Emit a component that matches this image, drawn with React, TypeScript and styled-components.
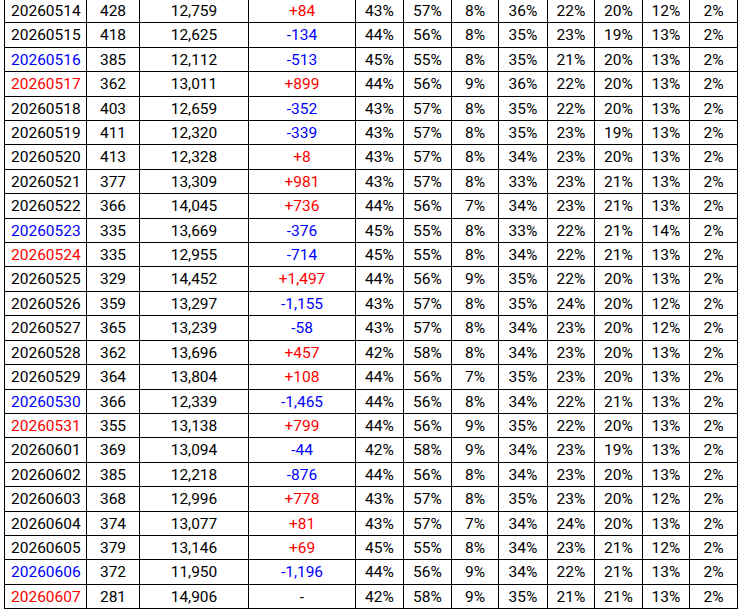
import React from "react";
import styled, { createGlobalStyle } from "styled-components";

const Global = createGlobalStyle`
  html, body { margin: 0; padding: 0; background: #ffffff; }
  body { font-family: Roboto, "Noto Sans", Arial, sans-serif; }
`;

type Tone = "black" | "red" | "blue";

interface Row {
  date: string;
  dateTone: Tone;
  count: string;
  total: string;
  change: string;
  pct: string[];
}

const raw: [string, Tone, string, string, string, string][] = [
  ["20260514", "black", "428", "12,759", "+84", "43 57 8 36 22 20 12 2"],
  ["20260515", "black", "418", "12,625", "-134", "44 56 8 35 23 19 13 2"],
  ["20260516", "blue", "385", "12,112", "-513", "45 55 8 35 21 20 13 2"],
  ["20260517", "red", "362", "13,011", "+899", "44 56 9 36 22 20 13 2"],
  ["20260518", "black", "403", "12,659", "-352", "43 57 8 35 22 20 13 2"],
  ["20260519", "black", "411", "12,320", "-339", "43 57 8 35 23 19 13 2"],
  ["20260520", "black", "413", "12,328", "+8", "43 57 8 34 23 20 13 2"],
  ["20260521", "black", "377", "13,309", "+981", "43 57 8 33 23 21 13 2"],
  ["20260522", "black", "366", "14,045", "+736", "44 56 7 34 23 21 13 2"],
  ["20260523", "blue", "335", "13,669", "-376", "45 55 8 33 22 21 14 2"],
  ["20260524", "red", "335", "12,955", "-714", "45 55 8 34 22 21 13 2"],
  ["20260525", "black", "329", "14,452", "+1,497", "44 56 9 35 22 20 13 2"],
  ["20260526", "black", "359", "13,297", "-1,155", "43 57 8 35 24 20 12 2"],
  ["20260527", "black", "365", "13,239", "-58", "43 57 8 34 23 20 12 2"],
  ["20260528", "black", "362", "13,696", "+457", "42 58 8 34 23 20 13 2"],
  ["20260529", "black", "364", "13,804", "+108", "44 56 7 35 23 20 13 2"],
  ["20260530", "blue", "366", "12,339", "-1,465", "44 56 8 34 22 21 13 2"],
  ["20260531", "red", "355", "13,138", "+799", "44 56 9 35 22 20 13 2"],
  ["20260601", "black", "369", "13,094", "-44", "42 58 9 34 23 19 13 2"],
  ["20260602", "black", "385", "12,218", "-876", "44 56 8 34 23 20 13 2"],
  ["20260603", "black", "368", "12,996", "+778", "43 57 8 35 23 20 12 2"],
  ["20260604", "black", "374", "13,077", "+81", "43 57 7 34 24 20 13 2"],
  ["20260605", "black", "379", "13,146", "+69", "45 55 8 34 23 21 12 2"],
  ["20260606", "blue", "372", "11,950", "-1,196", "44 56 9 34 22 21 13 2"],
  ["20260607", "red", "281", "14,906", "-", "42 58 9 35 21 21 13 2"],
];

const rows: Row[] = raw.map(([date, dateTone, count, total, change, p]) => ({
  date,
  dateTone,
  count,
  total,
  change,
  pct: p.split(" ").map((v) => v + "%"),
}));

const colors: Record<Tone, string> = {
  black: "#000000",
  red: "#ff0000",
  blue: "#0000ff",
};

const widths = [82, 53, 109, 107, 48, 48, 47, 49, 47, 48, 47, 48];

const Page = styled.div`
  padding-left: 4px;
  overflow: hidden;
  height: 613px;
`;

const Table = styled.table`
  border-collapse: collapse;
  table-layout: fixed;
  width: 733px;
  margin-top: -2px;
  font-family: Roboto, "Noto Sans", Arial, sans-serif;
  font-size: 15.5px;
  color: #000000;
`;

const Cell = styled.td<{ $tone?: Tone; $left?: boolean }>`
  border: 1px solid #000000;
  padding: 1px 0 0 ${(p) => (p.$left ? "6px" : "0")};
  height: 23.4px;
  line-height: 22.4px;
  text-align: ${(p) => (p.$left ? "left" : "center")};
  color: ${(p) => colors[p.$tone ?? "black"]};
  white-space: nowrap;
  box-sizing: border-box;
`;

const changeTone = (c: string): Tone =>
  c.startsWith("+") ? "red" : c.startsWith("-") && c.length > 1 ? "blue" : "black";

export default function App() {
  return (
    <>
      <Global />
      <Page>
        <Table>
          <colgroup>
            {widths.map((w, i) => (
              <col key={i} style={{ width: w }} />
            ))}
          </colgroup>
          <tbody>
            {rows.map((r) => (
              <tr key={r.date}>
                <Cell $left $tone={r.dateTone}>
                  {r.date}
                </Cell>
                <Cell>{r.count}</Cell>
                <Cell>{r.total}</Cell>
                <Cell $tone={changeTone(r.change)}>{r.change}</Cell>
                {r.pct.map((v, i) => (
                  <Cell key={i}>{v}</Cell>
                ))}
              </tr>
            ))}
          </tbody>
        </Table>
      </Page>
    </>
  );
}
